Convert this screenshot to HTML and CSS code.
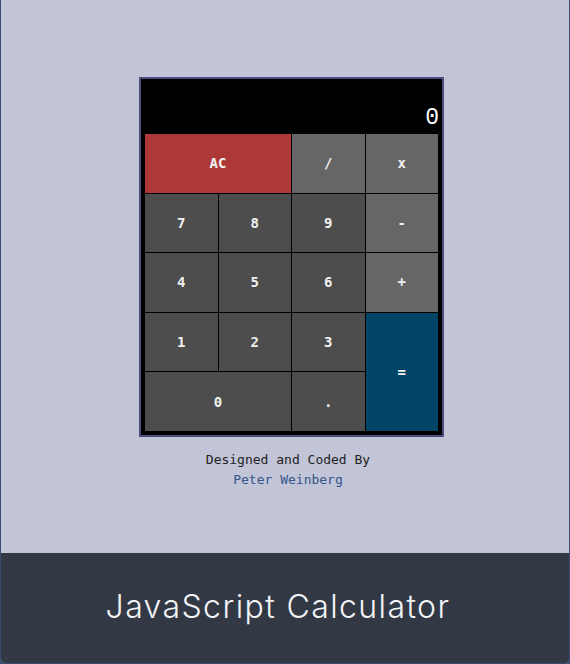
FILE: index.html
```html
<!DOCTYPE html>
<html>
<head>
<meta charset="utf-8">
<link rel="stylesheet" href="styles.css">
</head>
<body>
<div class="page">
  <main class="main">
    <div class="calc">
      <div class="display"><span class="output">0</span></div>
      <div class="keys">
        <div class="key ac">AC</div>
        <div class="key op">/</div>
        <div class="key op">x</div>
        <div class="key">7</div>
        <div class="key">8</div>
        <div class="key">9</div>
        <div class="key op">-</div>
        <div class="key">4</div>
        <div class="key">5</div>
        <div class="key">6</div>
        <div class="key op">+</div>
        <div class="key">1</div>
        <div class="key">2</div>
        <div class="key">3</div>
        <div class="key eq">=</div>
        <div class="key zero">0</div>
        <div class="key">.</div>
      </div>
    </div>
    <div class="credits">
      <div>Designed and Coded By</div>
      <div class="author">Peter Weinberg</div>
    </div>
  </main>
  <footer class="footer">
    <h1 class="title">JavaScript Calculator</h1>
  </footer>
</div>
</body>
</html>
```
FILE: styles.css
```css
html, body {
  margin: 0;
  padding: 0;
  background: #3b4a78;
}
.page {
  width: 570px;
  height: 664px;
  box-sizing: border-box;
  border: 1px solid #3b4a78;
  border-top: none;
  border-radius: 0 0 5px 5px;
  display: flex;
  flex-direction: column;
  overflow: hidden;
  background: #c2c4d8;
}
.main {
  height: 553px;
  background: #c2c4d8;
  display: flex;
  flex-direction: column;
}
.calc {
  margin: 77px 0 0 138px;
  width: 305px;
  box-sizing: border-box;
  border: 2px solid #4b4b7e;
  background: #000;
  padding: 0 4px 4px 4px;
}
.display {
  height: 55px;
  display: flex;
  align-items: flex-end;
  justify-content: flex-end;
}
.output {
  font-family: "Liberation Mono", monospace;
  font-size: 23px;
  line-height: 23px;
  color: #fff;
  margin-bottom: 4px;
  margin-right: -1px;
}
.keys {
  display: grid;
  grid-template-columns: repeat(4, 1fr);
  grid-template-rows: repeat(5, 58.6px);
  gap: 1px;
  background: #000;
  width: 293px;
}
.key {
  background: #4d4d4d;
  color: #f0f0f0;
  font-family: "DejaVu Sans Mono", monospace;
  font-weight: bold;
  font-size: 14px;
  display: flex;
  align-items: center;
  justify-content: center;
}
.ac {
  grid-column: span 2;
  background: #ad3838;
}
.op {
  background: #666666;
}
.eq {
  grid-row: span 2;
  background: #004467;
}
.zero {
  grid-column: span 2;
}
.credits {
  margin: 13px 0 0 6px;
  text-align: center;
  font-family: "DejaVu Sans Mono", monospace;
  font-size: 13px;
  line-height: 20px;
  color: #222;
}
.author {
  color: #335588;
}
.footer {
  flex: 1;
  background: #323945;
  display: flex;
  align-items: center;
  justify-content: center;
}
.title {
  margin: 0 14px 4px 0;
  font-family: "Inter", sans-serif;
  font-weight: 300;
  font-size: 32px;
  letter-spacing: 1.4px;
  color: #f2f4f8;
}
```
